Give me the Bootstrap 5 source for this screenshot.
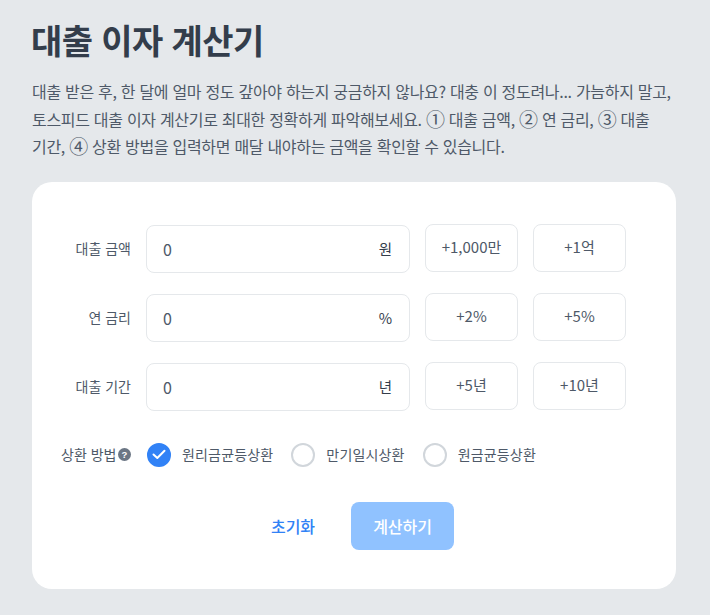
<!DOCTYPE html>
<html lang="ko">
<head>
<meta charset="UTF-8">
<title>대출 이자 계산기</title>
<link href="https://cdn.jsdelivr.net/npm/bootstrap@5.3.3/dist/css/bootstrap.min.css" rel="stylesheet">
<style>
body { background: #e5e8eb; font-family: "Noto Sans CJK KR", "Noto Sans", sans-serif; color: #4e5968; }
.calc-page { padding: 15px 32px 26px 32px; width: 708px; }
.calc-title { font-size: 34px; font-weight: 700; color: #333d4b; line-height: 50px; margin: 0 0 13px -1px; letter-spacing: -0.6px; }
.calc-desc { font-size: 16px; line-height: 27.5px; color: #4e5968; margin: 0 0 21px; letter-spacing: -0.3px; white-space: nowrap; }
.calc-num { font-size: 19px; line-height: 1; vertical-align: -1px; }
.calc-card { background: #fff; border-radius: 20px; padding: 42px 50px 39px 28px; height: 407px; }
.calc-row { height: 49px; margin-bottom: 20px; gap: 15px; }
.calc-label { width: 71px; text-align: right; font-size: 14px; color: #4e5968; flex: none; align-self: center; }
.calc-input { width: 264px; height: 48px; margin-top: 1px; flex: none; border: 1px solid #e5e8eb; border-radius: 8px; padding: 0 17px 0 16px; font-size: 16px; color: #4e5968; background: #fff; }
.calc-input b { font-weight: 400; font-size: 14.5px; color: #333d4b; }
.calc-add { width: 93px; height: 48px; flex: none; border: 1px solid #e5e8eb; border-radius: 8px; background: #fff; font-size: 15px; color: #4e5968; padding: 0; }
.repay-row { margin-top: 32px; gap: 15px; height: 24px; padding-left: 1px; }
.repay-label { width: 71px; flex: none; font-size: 14px; white-space: nowrap; gap: 2px; }
.repay-label svg { flex: none; }
.repay-options { gap: 18px; font-size: 14px; letter-spacing: 0.17px; }
.repay-opt { gap: 11px; }
.repay-dot { width: 24px; height: 24px; border-radius: 50%; border: 2px solid #d1d6db; background: #fff; flex: none; }
.repay-dot.is-on { background: #3182f6; border-color: #3182f6; }
.calc-actions { margin-top: 35px; gap: 36px; padding-left: 39px; }
.calc-reset { font-size: 16px; font-weight: 500; color: #3182f6; background: none; border: 0; padding: 0; }
.calc-submit { width: 103px; height: 48px; background: #90c2ff; border: 0; border-radius: 8px; color: #fff; font-size: 16px; font-weight: 500; }
</style>
</head>
<body>
<div class="calc-page">
  <h1 class="calc-title">대출 이자 계산기</h1>
  <p class="calc-desc">대출 받은 후, 한 달에 얼마 정도 갚아야 하는지 궁금하지 않나요? 대충 이 정도려나... 가늠하지 말고,<br>토스피드 대출 이자 계산기로 최대한 정확하게 파악해보세요. <span class="calc-num">①</span> 대출 금액, <span class="calc-num">②</span> 연 금리, <span class="calc-num">③</span> 대출<br>기간, <span class="calc-num">④</span> 상환 방법을 입력하면 매달 내야하는 금액을 확인할 수 있습니다.</p>
  <div class="calc-card">
    <div class="calc-row d-flex align-items-start">
      <div class="calc-label">대출 금액</div>
      <div class="calc-input d-flex align-items-center justify-content-between"><span>0</span><b>원</b></div>
      <button class="calc-add">+1,000만</button>
      <button class="calc-add">+1억</button>
    </div>
    <div class="calc-row d-flex align-items-start">
      <div class="calc-label">연 금리</div>
      <div class="calc-input d-flex align-items-center justify-content-between"><span>0</span><b>%</b></div>
      <button class="calc-add">+2%</button>
      <button class="calc-add">+5%</button>
    </div>
    <div class="calc-row d-flex align-items-start">
      <div class="calc-label">대출 기간</div>
      <div class="calc-input d-flex align-items-center justify-content-between"><span>0</span><b>년</b></div>
      <button class="calc-add">+5년</button>
      <button class="calc-add">+10년</button>
    </div>
    <div class="repay-row d-flex align-items-center">
      <div class="repay-label d-flex align-items-center">상환 방법
        <svg width="13" height="13" viewBox="0 0 13 13"><circle cx="6.5" cy="6.5" r="6.5" fill="#6b7684"/><text x="6.5" y="9.8" text-anchor="middle" font-size="9.5" font-weight="700" fill="#fff" font-family="Liberation Sans, sans-serif">?</text></svg>
      </div>
      <div class="repay-options d-flex align-items-center">
        <div class="repay-opt d-flex align-items-center">
          <span class="repay-dot is-on d-flex align-items-center justify-content-center">
            <svg width="14" height="11" viewBox="0 0 14 11"><path d="M1.5 5.5 L5.3 9 L12.5 1.8" fill="none" stroke="#fff" stroke-width="2" stroke-linecap="round" stroke-linejoin="round"/></svg>
          </span>원리금균등상환
        </div>
        <div class="repay-opt d-flex align-items-center"><span class="repay-dot"></span>만기일시상환</div>
        <div class="repay-opt d-flex align-items-center"><span class="repay-dot"></span>원금균등상환</div>
      </div>
    </div>
    <div class="calc-actions d-flex align-items-center justify-content-center">
      <button class="calc-reset">초기화</button>
      <button class="calc-submit">계산하기</button>
    </div>
  </div>
</div>
<script src="https://cdn.jsdelivr.net/npm/bootstrap@5.3.3/dist/js/bootstrap.bundle.min.js"></script>
</body>
</html>
